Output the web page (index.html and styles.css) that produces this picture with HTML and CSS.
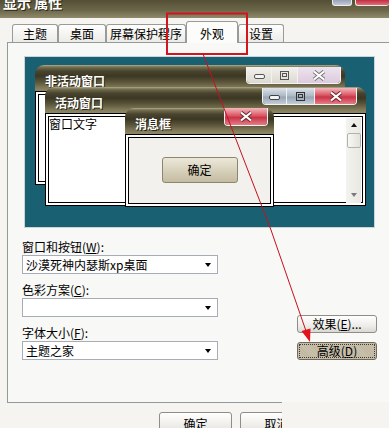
FILE: index.html
```html
<!DOCTYPE html>
<html lang="zh-CN">
  <head>
    <meta charset="UTF-8" />
    <title>显示 属性</title>
    <link rel="stylesheet" href="styles.css">
  </head>
  <body>
    <div class="titlebar">
      <span class="title">显示 属性</span>
      <div class="caption-btns">
        <span class="cap cap-help"></span>
        <span class="cap cap-close"></span>
      </div>
    </div>

    <div class="tabs">
      <div class="tab tab-theme">主题</div>
      <div class="tab tab-desk">桌面</div>
      <div class="tab tab-saver">屏幕保护程序</div>
      <div class="tab tab-look active">外观</div>
      <div class="tab tab-set">设置</div>
    </div>

    <div class="panel">
      <div class="preview">
        <div class="pv-win pv-inactive">
          <div class="pv-title">
            <span class="pv-caption">非活动窗口</span>
            <div class="pv-btns pv-btns-inactive">
              <span class="pv-btn pv-min"><svg width="11" height="5"><rect x="0.5" y="0.5" width="10" height="4" rx="1.5" fill="#f4f4f4" stroke="#555"/></svg></span>
              <span class="pv-btn pv-max"><svg width="9" height="9"><rect x="0.5" y="0.5" width="8" height="8" fill="none" stroke="#555"/><rect x="2.5" y="2.5" width="4" height="3" fill="none" stroke="#555"/></svg></span>
              <span class="pv-btn pv-close"><svg width="14" height="11"><path d="M2 1.5 L12 9.5 M12 1.5 L2 9.5" stroke="#777" stroke-width="4"/><path d="M2 1.5 L12 9.5 M12 1.5 L2 9.5" stroke="#fff" stroke-width="2.2"/></svg></span>
            </div>
          </div>
          <div class="pv-body"></div>
        </div>

        <div class="pv-win pv-active">
          <div class="pv-title">
            <span class="pv-caption">活动窗口</span>
            <div class="pv-btns pv-btns-active">
              <span class="pv-btn pv-min"><svg width="11" height="5"><rect x="0.5" y="0.5" width="10" height="4" rx="1.5" fill="#f4f4f4" stroke="#444"/></svg></span>
              <span class="pv-btn pv-max"><svg width="9" height="9"><rect x="0.5" y="0.5" width="8" height="8" fill="none" stroke="#333"/><rect x="2.5" y="2.5" width="4" height="3" fill="none" stroke="#333"/></svg></span>
              <span class="pv-btn pv-close"><svg width="14" height="11"><path d="M2 1.5 L12 9.5 M12 1.5 L2 9.5" stroke="#6b2a30" stroke-width="4"/><path d="M2 1.5 L12 9.5 M12 1.5 L2 9.5" stroke="#fff" stroke-width="2.2"/></svg></span>
            </div>
          </div>
          <div class="pv-body pv-body-active">
            <span class="pv-text">窗口文字</span>
            <div class="scrollbar">
              <span class="sb-up"></span>
              <span class="sb-thumb"></span>
              <span class="sb-down"></span>
            </div>
          </div>
        </div>

        <div class="pv-win pv-msg">
          <div class="pv-title">
            <span class="pv-caption">消息框</span>
            <div class="pv-btns pv-btns-msg">
              <span class="pv-btn pv-close"><svg width="14" height="11"><path d="M2 1.5 L12 9.5 M12 1.5 L2 9.5" stroke="#6b2a30" stroke-width="4"/><path d="M2 1.5 L12 9.5 M12 1.5 L2 9.5" stroke="#fff" stroke-width="2.2"/></svg></span>
            </div>
          </div>
          <div class="pv-body pv-body-msg">
            <span class="pv-ok">确定</span>
          </div>
        </div>
      </div>

      <div class="options">
        <div class="fields">
          <div class="field">
            <label>窗口和按钮(<u>W</u>):</label>
            <div class="combo"><span>沙漠死神内瑟斯xp桌面</span><i class="arrow"></i></div>
          </div>
          <div class="field">
            <label>色彩方案(<u>C</u>):</label>
            <div class="combo"><span></span><i class="arrow"></i></div>
          </div>
          <div class="field">
            <label>字体大小(<u>F</u>):</label>
            <div class="combo"><span>主题之家</span><i class="arrow"></i></div>
          </div>
        </div>
        <div class="side-btns">
          <button class="btn">效果(<u>E</u>)...</button>
          <button class="btn btn-pressed">高级(<u>D</u>)</button>
        </div>
      </div>
    </div>

    <div class="footer">
      <div class="panel-edge"></div>
      <div class="footer-btns">
        <button class="btn btn-lg">确定</button>
        <button class="btn btn-lg">取消</button>
      </div>
    </div>

    <!-- red markup drawn over the screenshot -->
    <svg class="markup" width="389" height="428" viewBox="0 0 389 428">
      <rect x="167" y="13.5" width="80" height="40.5" fill="none" stroke="#d3141f" stroke-width="2"/>
      <polyline points="203,54 271,230 306,331" fill="none" stroke="#c8101c" stroke-width="1"/>
      <polygon points="310,342 301.5,331 310.5,328.5" fill="#e3121c"/>
    </svg>
  </body>
</html>
```

FILE: styles.css
```css
/* Global styles */
* {
  box-sizing: border-box;
  margin: 0;
  padding: 0;
}

body {
  position: relative;
  width: 389px;
  height: 428px;
  overflow: hidden;
  background: #f5f4f0;
  font-family: "Noto Sans CJK SC", "Noto Sans", sans-serif;
  font-size: 12px;
  color: #000;
}

u {
  text-decoration: underline;
}

/* Dialog title bar */
.titlebar {
  display: flex;
  align-items: flex-start;
  height: 18px;
  padding-left: 3px;
  background: linear-gradient(#544f35, #6b6548 55%, #908a6c);
}

.title {
  margin-top: -5px;
  color: #fff;
  font-size: 14px;
  font-weight: bold;
  line-height: 14px;
  text-shadow: 1px 1px 0 #2b2818;
}

.caption-btns {
  display: flex;
  gap: 3px;
  margin-left: auto;
}

.cap {
  height: 6px;
  border: 1px solid #ececec;
  border-top: none;
  border-radius: 0 0 3px 3px;
}

.cap-help {
  width: 20px;
  background: linear-gradient(#97a3b8, #c3cad8);
}

.cap-close {
  width: 34px;
  border-right: none;
  background: linear-gradient(#c02f40, #e26c78);
}

/* Tabs */
.tabs {
  display: flex;
  align-items: flex-end;
  height: 24px;
  padding-left: 12px;
}

.tab {
  height: 18px;
  border: 1px solid #9a9b96;
  border-bottom: none;
  border-radius: 3px 3px 0 0;
  background: linear-gradient(#fefefe, #ecebe6);
  text-align: center;
  line-height: 17px;
  white-space: nowrap;
}

.tab-theme { width: 46px; }
.tab-desk { width: 48px; }
.tab-saver { width: 80px; }
.tab-look { width: 52px; }
.tab-set { width: 46px; }

.tab.active {
  position: relative;
  z-index: 1;
  height: 22px;
  margin-bottom: -1px;
  padding-top: 3px;
  background: #fcfcfb;
}

/* Tab page */
.panel {
  width: 400px;
  height: 360px;
  margin-left: 7px;
  border-top: 1px solid #919b9c;
  border-left: 1px solid #919b9c;
  background: #f8f8f6;
}

.preview {
  position: relative;
  width: 349px;
  height: 170px;
  margin: 14px 0 0 17px;
  background: #1a6073;
  box-shadow: 0 0 0 1px #cdd4d6;
  overflow: hidden;
}

.pv-win {
  position: absolute;
  display: flex;
  flex-direction: column;
}

.pv-inactive { left: 10px; top: 8px; width: 310px; height: 120px; }
.pv-active { left: 20px; top: 30px; width: 321px; height: 119px; }
.pv-msg { left: 100px; top: 51px; width: 149px; height: 99px; }

.pv-title {
  display: flex;
  align-items: flex-start;
  flex: none;
  height: 26px;
  border-radius: 9px 9px 0 0;
  background: linear-gradient(180deg, #aeab92 0, #77714f 2px, #4a4530 6px, #3b3723 11px, #5b553a 17px, #837c5b 23px, #8f8866 26px);
}

.pv-caption {
  padding: 9px 0 0 10px;
  color: #fff;
  font-weight: bold;
  line-height: 14px;
  text-shadow: 1px 1px 0 #2a2617;
}

.pv-btns {
  display: flex;
  height: 17px;
  margin: 1px 0 0 auto;
  border: 1px solid #f2f2f2;
  border-top: none;
  border-radius: 0 0 4px 4px;
  overflow: hidden;
}

.pv-btns-inactive { margin-right: 4px; margin-top: 2px; }
.pv-btns-active { margin-right: 9px; }
.pv-btns-msg { margin-right: 6px; margin-top: 0; height: 18px; }

.pv-btn {
  display: flex;
  align-items: center;
  justify-content: center;
}

.pv-btn + .pv-btn {
  border-left: 1px solid #f2f2f2;
}

.pv-min { width: 24px; align-items: flex-end; padding-bottom: 4px; }
.pv-max { width: 26px; }
.pv-close { width: 42px; }

.pv-btns-inactive .pv-min,
.pv-btns-inactive .pv-max {
  background: linear-gradient(#f3f1ed, #dcd9d1);
}

.pv-btns-inactive .pv-close {
  width: 43px;
  background: linear-gradient(#efe3ef, #dccbde);
}

.pv-btns-active .pv-min {
  width: 23px;
}

.pv-btns-active .pv-max {
  width: 28px;
}

.pv-btns-active .pv-min,
.pv-btns-active .pv-max {
  background: linear-gradient(#dde3ea, #abb8c6 50%, #96a4b4 56%, #c4cdd8);
}

.pv-btns-active .pv-close,
.pv-btns-msg .pv-close {
  background: linear-gradient(#f2b9be, #db5663 45%, #c93547 56%, #e57c87);
}

.pv-body {
  flex: 1;
  background: #fff;
  box-shadow: inset 0 0 0 1px #000, inset 0 0 0 3px #fff, inset 0 0 0 4px #000;
}

.pv-body-active {
  display: flex;
  align-items: flex-start;
  padding: 4px 5px 3px 4px;
}

.pv-text {
  line-height: 14px;
  background: #fff;
}

.scrollbar {
  display: flex;
  flex-direction: column;
  align-items: center;
  align-self: stretch;
  width: 15px;
  margin: 1px 0 0 auto;
  background: linear-gradient(90deg, #f3f3ef, #e9e8e2);
}

.sb-up,
.sb-down {
  width: 0;
  height: 0;
  border-left: 3.5px solid transparent;
  border-right: 3.5px solid transparent;
}

.sb-up {
  margin-top: 5px;
  border-bottom: 4px solid #111;
}

.sb-down {
  margin: auto 0 6px;
  border-top: 4px solid #7a7a7a;
}

.sb-thumb {
  width: 14px;
  height: 15px;
  margin-top: 6px;
  border: 1px solid #b4b3ab;
  border-radius: 2px;
  background: linear-gradient(90deg, #f7f7f5, #e3e2dc);
}

.pv-body-msg {
  display: flex;
  justify-content: center;
  align-items: flex-start;
  padding-top: 23px;
  background: #f2f1ee;
}

.pv-ok {
  width: 76px;
  height: 26px;
  border: 1px solid #8c866d;
  border-radius: 3px;
  background: linear-gradient(#ece8da, #d4cdb6 60%, #c4bca2);
  text-align: center;
  line-height: 24px;
}

/* Options below the preview */
.options {
  display: flex;
  margin-top: 13px;
  padding-left: 14px;
}

.fields {
  width: 196px;
}

.field + .field {
  margin-top: 9px;
}

.field label {
  display: block;
  margin-bottom: 1px;
  line-height: 14px;
}

.combo {
  display: flex;
  align-items: center;
  height: 19px;
  padding-left: 3px;
  border: 1px solid #a7adb4;
  background: #fff;
  white-space: nowrap;
}

.combo .arrow {
  width: 0;
  height: 0;
  margin: 1px 6px 0 auto;
  border-left: 3.5px solid transparent;
  border-right: 3.5px solid transparent;
  border-top: 4px solid #000;
}

.side-btns {
  display: flex;
  flex-direction: column;
  gap: 9px;
  margin-left: 79px;
  padding-top: 75px;
}

.btn {
  width: 80px;
  height: 18px;
  border: 1px solid #8f8d85;
  border-radius: 3px;
  background: linear-gradient(#ffffff, #ecebe7 65%, #d9d8d2);
  font: inherit;
  line-height: 16px;
  text-align: center;
  color: #000;
}

.btn-pressed {
  border-color: #6f6a5a;
  background: repeating-linear-gradient(45deg, #c9c1ab 0 1px, #bfb7a0 1px 2px);
  outline: 1px dotted #3a3a3a;
  outline-offset: -3px;
}

/* Bottom buttons, cut off at the right */
.footer {
  width: 282px;
  overflow: hidden;
}

.panel-edge {
  height: 1px;
  margin-left: 7px;
  background: #919b9c;
}

.footer-btns {
  display: flex;
  gap: 8px;
  margin-top: 9px;
  padding-left: 159px;
}

.btn-lg {
  flex: none;
  width: 73px;
  height: 23px;
  line-height: 19px;
}

.markup {
  position: absolute;
  top: 0;
  left: 0;
  pointer-events: none;
}
```
